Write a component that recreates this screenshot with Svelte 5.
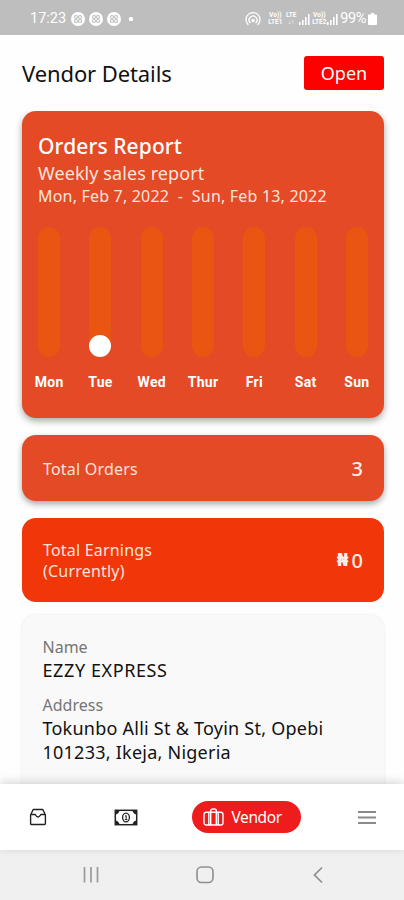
<script>
  const days = [
    { label: 'Mon', orders: 0 },
    { label: 'Tue', orders: 3 },
    { label: 'Wed', orders: 0 },
    { label: 'Thur', orders: 0 },
    { label: 'Fri', orders: 0 },
    { label: 'Sat', orders: 0 },
    { label: 'Sun', orders: 0 }
  ];

  const signals = [
    ['Vo))', 'LTE1'],
    ['LTE', '↓↑'],
    null,
    ['Vo))', 'LTE2'],
    null
  ];

  let isOpen = $state(true);
</script>

<div class="screen">
  <div class="status">
    <span class="clock">17:23</span>
    {#each [1, 2, 3] as n (n)}
      <svg class="notif" width="14" height="14" viewBox="0 0 14 14">
        <circle cx="7" cy="7" r="7" fill="#fff" />
        <g fill="none" stroke="#bebebe" stroke-width="1.1">
          <circle cx="5" cy="5" r="1.5" />
          <circle cx="9" cy="5" r="1.5" />
          <circle cx="5" cy="9" r="1.5" />
          <circle cx="9" cy="9" r="1.5" />
        </g>
      </svg>
    {/each}
    <span class="dot"></span>
    <div class="right">
      <svg class="hotspot" width="16" height="14" viewBox="0 0 16 14" fill="none" stroke="#fff" stroke-width="1.3" stroke-linecap="round">
        <path d="M3 12.5A7 7 0 1 1 13 12.5" />
        <path d="M5 10.8A4 4 0 1 1 11 10.8" />
        <circle cx="8" cy="8.5" r="1.1" fill="#fff" />
      </svg>
      {#each signals as s}
        {#if s}
          <span class="net"><span>{s[0]}</span><span>{s[1]}</span></span>
        {:else}
          <svg width="12" height="12" viewBox="0 0 12 12" fill="#fff">
            <path d="M0 9h1.6v3H0zM3 7h1.6v5H3zM6 4h1.6v8H6zM9 1h1.6v11H9z" />
          </svg>
        {/if}
      {/each}
      <span class="percent">99%</span>
      <svg width="9" height="12" viewBox="0 0 9 12" fill="#fff">
        <path d="M3 0h3v1.5h2a1 1 0 0 1 1 1V11a1 1 0 0 1-1 1H1a1 1 0 0 1-1-1V2.5a1 1 0 0 1 1-1h2z" />
      </svg>
    </div>
  </div>

  <header>
    <h1>Vendor Details</h1>
    <button type="button" class="open" onclick={() => (isOpen = !isOpen)}>{isOpen ? 'Open' : 'Close'}</button>
  </header>

  <main>
    <section class="card report">
      <h2>Orders Report</h2>
      <p class="sub">Weekly sales report</p>
      <p class="range">Mon, Feb 7, 2022 &nbsp;-&nbsp; Sun, Feb 13, 2022</p>
      <div class="chart">
        {#each days as day (day.label)}
          <div class="day">
            <div class="bar">
              {#if day.orders}
                <div class="fill"></div>
              {/if}
            </div>
            <span>{day.label}</span>
          </div>
        {/each}
      </div>
    </section>

    <section class="card total">
      <span class="label">Total Orders</span>
      <strong>3</strong>
    </section>

    <section class="card earnings">
      <span class="label">Total Earnings<br />(Currently)</span>
      <strong><b>₦</b><span>0</span></strong>
    </section>

    <section class="card info">
      <span class="key">Name</span>
      <p class="name">EZZY EXPRESS</p>
      <span class="key">Address</span>
      <p class="address">Tokunbo Alli St &amp; Toyin St, Opebi<br />101233, Ikeja, Nigeria</p>
    </section>
  </main>

  <nav>
    <button type="button" aria-label="Orders">
      <svg width="18" height="18" viewBox="0 0 18 18" fill="none" stroke="#222" stroke-width="1.4" stroke-linejoin="round" stroke-linecap="round">
        <path d="M4.2 1.5h9.6l2.6 5.5v8.5a1 1 0 0 1-1 1H2.6a1 1 0 0 1-1-1V7z" />
        <path d="M2.5 6.500h3.500c.8 0 .8 2.500 3 2.500s2.200-2.500 3-2.500h3.500" />
      </svg>
    </button>
    <button type="button" aria-label="Earnings">
      <svg width="24" height="17" viewBox="0 0 24 17" fill="none" stroke="#222" stroke-width="1.5">
        <rect x="1.3" y="1.3" width="21.4" height="14.4" />
        <path d="M1 1h4.5A4.5 4.5 0 0 1 1 5.5zM23 1h-4.5A4.5 4.5 0 0 0 23 5.5zM1 16h4.5A4.5 4.5 0 0 0 1 11.5zM23 16h-4.5a4.5 4.5 0 0 1 4.5-4.5z" fill="#222" stroke="none" />
        <ellipse cx="12" cy="8.5" rx="3.4" ry="4.3" stroke-width="1.3" />
        <path d="M11 7.3l1.2-.8v4M10.8 10.6h2.6" stroke-width="1" />
      </svg>
    </button>
    <button type="button" class="active">
      <svg width="21" height="18" viewBox="0 0 21 18" fill="none" stroke="#fff" stroke-width="1.4" stroke-linejoin="round">
        <rect x="1" y="4.3" width="19" height="12.7" rx="2.2" />
        <path d="M5.8 17V4.3M15.2 17V4.3M7.7 17V3A2 2 0 0 1 9.7 1h1.6a2 2 0 0 1 2 2v14" />
      </svg>
      Vendor
    </button>
    <button type="button" aria-label="Menu">
      <svg width="18" height="15" viewBox="0 0 18 15" stroke="#8a8a8a" stroke-width="2.2">
        <path d="M0 2h18M0 7.5h18M0 13h18" />
      </svg>
    </button>
  </nav>

  <div class="system">
    <svg width="18" height="18" viewBox="0 0 18 18" stroke="#999" stroke-width="1.7">
      <path d="M2.5 1v15.5M9 1v15.5M15.5 1v15.5" />
    </svg>
    <svg width="18" height="18" viewBox="0 0 18 18" fill="none" stroke="#8e8e8e" stroke-width="1.6">
      <rect x="1" y="1" width="16" height="15.5" rx="4.5" />
    </svg>
    <svg width="18" height="18" viewBox="0 0 18 18" fill="none" stroke="#8e8e8e" stroke-width="1.7">
      <path d="M13 1.5L5.5 9l7.5 7.5" />
    </svg>
  </div>
</div>

<style>
  :global(body) {
    margin: 0;
    background: #fff;
  }

  .screen {
    width: 404px;
    height: 900px;
    display: flex;
    flex-direction: column;
    overflow: hidden;
    background: #fefefe;
    color: #111;
    font-family: 'Noto Sans', sans-serif;
  }

  h1,
  h2,
  p {
    margin: 0;
    font-weight: 400;
    white-space: nowrap;
  }

  button {
    border: none;
    background: none;
    padding: 0;
    font-family: inherit;
    cursor: pointer;
  }

  svg {
    display: block;
    flex: none;
  }

  .status {
    height: 35px;
    flex: none;
    box-sizing: border-box;
    display: flex;
    align-items: center;
    padding: 2px 27px 0 30px;
    background: #bebebe;
    color: #fff;
    font-family: Roboto, sans-serif;
    font-size: 14.5px;
  }

  .clock {
    width: 41px;
  }

  .notif {
    margin-right: 4px;
  }

  .dot {
    width: 4px;
    height: 4px;
    margin-left: 4px;
    border-radius: 1px;
    background: #fff;
  }

  .right {
    margin-left: auto;
    display: flex;
    align-items: center;
  }

  .hotspot {
    margin-right: 6px;
  }

  .net {
    display: flex;
    flex-direction: column;
    align-items: center;
    min-width: 16px;
    font-size: 6.5px;
    line-height: 6.5px;
    font-weight: 700;
  }

  .percent {
    letter-spacing: -0.4px;
    margin: 0 2px 0 1px;
  }

  header {
    height: 75px;
    flex: none;
    display: flex;
    align-items: center;
    justify-content: space-between;
    padding: 0 20px 1px 22px;
  }

  h1 {
    font-size: 22px;
    letter-spacing: -0.1px;
  }

  .open {
    width: 80px;
    height: 34px;
    border-radius: 3px;
    background: #fd0000;
    color: #fff;
    font-size: 18px;
  }

  main {
    flex: 1;
    min-height: 0;
    display: flex;
    flex-direction: column;
    padding: 0 20px 0 22px;
    overflow: hidden;
  }

  .card {
    flex: none;
    box-sizing: border-box;
    border-radius: 14px;
    color: #fde4dc;
  }

  .report {
    height: 307px;
    padding: 22px 0 0 16px;
    background: #e34a25;
    box-shadow: 0 3px 7px rgba(0, 0, 0, 0.35);
  }

  h2 {
    font-size: 21px;
    line-height: 27px;
    font-weight: 500;
    letter-spacing: 0.1px;
    color: #fff;
  }

  .sub {
    font-size: 18px;
    line-height: 26px;
    letter-spacing: 0.08px;
  }

  .range {
    font-size: 16px;
    line-height: 21px;
    letter-spacing: 0.19px;
  }

  .chart {
    display: grid;
    grid-template-columns: repeat(7, 51.3px);
    margin: 20px 0 0 -14.5px;
  }

  .day {
    display: flex;
    flex-direction: column;
    align-items: center;
    font-family: Roboto, sans-serif;
    font-size: 14px;
    line-height: 18px;
    letter-spacing: 0.3px;
    font-weight: 700;
    color: #fff;
  }

  .bar {
    width: 22px;
    height: 130px;
    margin-bottom: 16px;
    display: flex;
    align-items: flex-end;
    border-radius: 11px;
    background: #ea5511;
  }

  .fill {
    width: 22px;
    height: 22px;
    border-radius: 50%;
    background: #fff;
  }

  .total,
  .earnings {
    display: flex;
    align-items: center;
    justify-content: space-between;
    padding: 0 21px;
    margin-top: 17px;
  }

  .total {
    height: 66px;
    background: #e34a25;
    box-shadow: 0 3px 6px rgba(0, 0, 0, 0.35);
  }

  .earnings {
    height: 84px;
    background: #f13609;
  }

  .label {
    padding-top: 2px;
    font-size: 16px;
    line-height: 21px;
    letter-spacing: 0.2px;
  }

  strong {
    display: flex;
    align-items: center;
    gap: 3px;
    font-size: 20px;
    font-weight: 500;
    color: #fff0ea;
  }

  strong b {
    font-family: 'DejaVu Sans', sans-serif;
    font-size: 17px;
    font-weight: 700;
  }

  .info {
    height: 220px;
    margin-top: 13px;
    padding: 22px 20.5px;
    background: #f9f9f9;
    box-shadow: 0 0 3px rgba(0, 0, 0, 0.1);
    color: #111;
  }

  .key {
    display: block;
    font-size: 16px;
    line-height: 21px;
    color: #757575;
  }

  .name,
  .address {
    font-size: 18px;
    line-height: 24px;
    letter-spacing: 0.24px;
  }

  .name {
    margin-bottom: 13px;
    letter-spacing: 0.6px;
  }

  nav {
    position: relative;
    height: 66px;
    flex: none;
    display: grid;
    grid-template-columns: 76px 100px 140px 102px;
    align-items: center;
    justify-items: center;
    background: #fff;
    box-shadow: 0 -2px 9px rgba(0, 0, 0, 0.16);
  }

  .active {
    width: 109px;
    height: 32px;
    display: flex;
    align-items: center;
    gap: 8px;
    padding-left: 11px;
    border-radius: 16px;
    background: #ee1c1c;
    color: #fff;
    font-size: 15.5px;
    letter-spacing: -0.4px;
  }

  .system {
    height: 50px;
    flex: none;
    display: flex;
    align-items: center;
    justify-content: space-between;
    padding: 0 77px 0 82px;
    background: #f0f0f0;
  }
</style>
